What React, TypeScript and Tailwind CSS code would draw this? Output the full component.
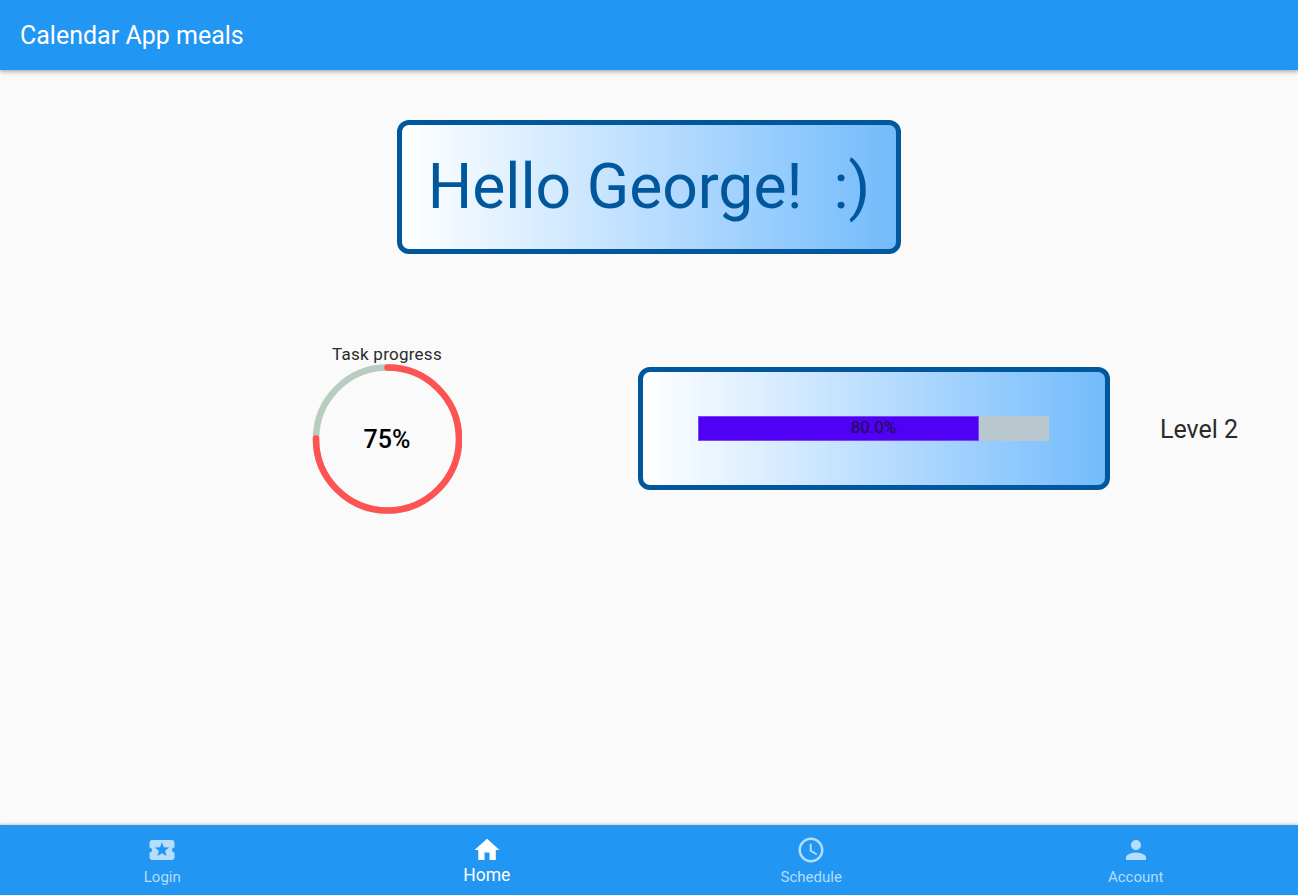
const Icon = ({ d }: { d: string }) => (
  <svg viewBox="0 0 24 24" className="w-[30px] h-[30px] fill-current">
    <path d={d} />
  </svg>
);

const tabs = [
  {
    label: "Login",
    d: "M20 12c0-1.1.9-2 2-2V6c0-1.1-.9-2-2-2H4c-1.1 0-1.99.9-1.99 2v4c1.1 0 1.99.9 1.99 2s-.89 2-2 2v4c0 1.1.9 2 2 2h16c1.1 0 2-.9 2-2v-4c-1.1 0-2-.9-2-2zm-4.42 4.8L12 14.5l-3.58 2.3 1.08-4.12-3.29-2.69 4.24-.25L12 5.8l1.54 3.95 4.24.25-3.29 2.69 1.09 4.11z",
  },
  { label: "Home", active: true, d: "M10 20v-6h4v6h5v-8h3L12 3 2 12h3v8z" },
  {
    label: "Schedule",
    d: "M11.99 2C6.47 2 2 6.48 2 12s4.47 10 9.99 10C17.52 22 22 17.52 22 12S17.52 2 11.99 2zM12 20c-4.42 0-8-3.58-8-8s3.58-8 8-8 8 3.58 8 8-3.58 8-8 8zM12.5 7H11v6l5.25 3.15.75-1.23-4.5-2.67z",
  },
  {
    label: "Account",
    d: "M12 12c2.21 0 4-1.79 4-4s-1.79-4-4-4-4 1.79-4 4 1.79 4 4 4zm0 2c-2.67 0-8 1.34-8 4v2h16v-2c0-2.66-5.33-4-8-4z",
  },
];

export default function App() {
  const r = 71.5;
  const c = 2 * Math.PI * r;
  return (
    <div className="h-[895px] flex flex-col bg-[#fafafa] overflow-hidden font-['Roboto',sans-serif]">
      <header className="h-[70px] shrink-0 bg-[#2196f3] flex items-center pl-5 pt-[2px] text-white text-[25px] shadow-[0_2px_4px_rgba(0,0,0,0.3)] z-10">
        Calendar App meals
      </header>

      <main className="flex-1 flex flex-col">
        <div className="flex justify-center pt-[50px]">
          <div className="w-[504px] h-[134px] border-[5px] border-[#01579b] rounded-[12px] bg-gradient-to-r from-white to-[#72bbfb] flex items-center justify-center text-[#01579b] text-[62.4px] whitespace-pre">
            Hello George!  :)
          </div>
        </div>

        <div className="flex items-center mt-[90px] pl-[312px]">
          <div className="w-[150px] flex flex-col items-center">
            <div className="h-5 leading-5 text-[17px] tracking-[0.25px] text-[#2b2b2b] whitespace-nowrap">Task progress</div>
            <div className="relative w-[150px] h-[150px]">
              <svg viewBox="0 0 150 150" className="w-[150px] h-[150px] -rotate-90">
                <circle cx="75" cy="75.5" r={r} fill="none" stroke="#b9ccc0" strokeWidth="6.5" />
                <circle
                  cx="75"
                  cy="75.5"
                  r={r}
                  fill="none"
                  stroke="#ff5252"
                  strokeWidth="6.5"
                  strokeLinecap="round"
                  strokeDasharray={`${c * 0.75} ${c}`}
                />
              </svg>
              <div className="absolute inset-0 pt-[2px] flex items-center justify-center text-[25px] font-medium text-black">75%</div>
            </div>
          </div>

          <div className="ml-[176px] mb-[2px] w-[472px] h-[123px] border-[5px] border-[#01579b] rounded-[12px] bg-gradient-to-r from-white to-[#72bbfb] pl-[55px] flex items-center">
            <div className="w-[351px] h-[25px] bg-[#b9c8ce] relative">
              <div className="h-full w-[281px] bg-[#5000f5] border border-[#7a45f5]" />
              <div className="absolute inset-0 flex items-center justify-center text-[17px] text-[#1c1040]">80.0%</div>
            </div>
          </div>

          <div className="ml-[50px] pt-[2px] text-[25px] text-[#2b2b2b] whitespace-nowrap">Level 2</div>
        </div>
      </main>

      <nav className="h-[70px] shrink-0 bg-[#2196f3] grid grid-cols-4 shadow-[0_-1px_3px_rgba(0,0,0,0.2)]">
        {tabs.map((t) => (
          <div
            key={t.label}
            className={`flex flex-col items-center pt-[10px] ${t.active ? "text-white" : "text-[#b5ddfc]"}`}
          >
            <Icon d={t.d} />
            <span className={t.active ? "text-[17.5px] leading-5" : "text-[15px] leading-5 mt-[2px]"}>{t.label}</span>
          </div>
        ))}
      </nav>
    </div>
  );
}
